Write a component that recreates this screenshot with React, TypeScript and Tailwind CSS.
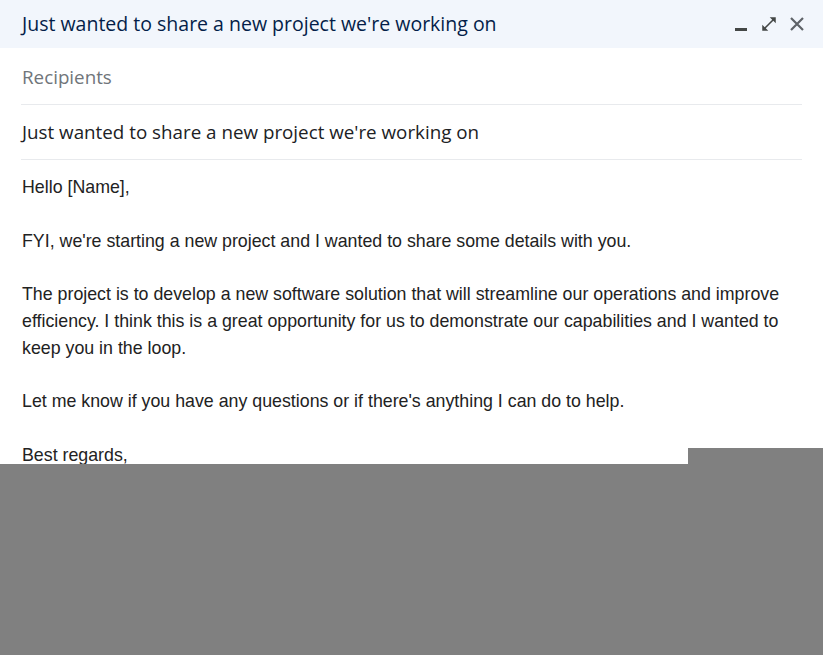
import React from "react";

export default function App() {
  return (
    <div className="relative w-[823px] h-[655px] overflow-hidden bg-white">
      <div className="h-[48px] bg-[#f2f6fc] flex items-center justify-between pl-[22px] pr-[19px]">
        <div className="text-[19.5px] text-[#041e49] font-medium" style={{ fontFamily: '"Open Sans", Roboto, sans-serif' }}>
          Just wanted to share a new project we're working on
        </div>
        <div className="flex items-center text-[#444746]">
          <svg width="12" height="16" viewBox="0 0 12 16" className="mt-[2px]">
            <rect x="0" y="11" width="12" height="3" fill="currentColor" />
          </svg>
          <svg width="18" height="18" viewBox="0 0 24 24" className="ml-[13px]">
            <path d="M21 11V3h-8l3.29 3.29-10 10L3 13v8h8l-3.29-3.29 10-10z" fill="currentColor" />
          </svg>
          <svg width="14" height="14" viewBox="0 0 14 14" className="ml-[12px] text-[#5f6368]">
            <path d="M1 1l12 12M13 1L1 13" stroke="currentColor" strokeWidth="2.2" />
          </svg>
        </div>
      </div>
      <div className="px-[21px]">
        <div className="h-[57px] flex items-center border-b border-[#e8eaed] text-[18.8px] text-[#70757a]" style={{ fontFamily: '"Open Sans", Roboto, sans-serif' }}>
          <span className="pl-[1px] mt-[2px]">Recipients</span>
        </div>
        <div className="h-[55px] flex items-center border-b border-[#e8eaed] text-[18.8px] text-[#202124]" style={{ fontFamily: '"Open Sans", Roboto, sans-serif' }}>
          <span className="pl-[1px] mt-[1px]">Just wanted to share a new project we're working on</span>
        </div>
        <div className="pt-[14px] pl-[1px] text-[17.8px] leading-[26.8px] text-[#222222]" style={{ fontFamily: '"Liberation Sans", Arial, sans-serif' }}>
          <p>Hello [Name],</p>
          <p className="mt-[26.8px]">FYI, we're starting a new project and I wanted to share some details with you.</p>
          <p className="mt-[26.8px]">The project is to develop a new software solution that will streamline our operations and improve efficiency. I think this is a great opportunity for us to demonstrate our capabilities and I wanted to keep you in the loop.</p>
          <p className="mt-[26.8px]">Let me know if you have any questions or if there's anything I can do to help.</p>
          <p className="mt-[26.8px]">Best regards,</p>
        </div>
      </div>
      <div className="absolute left-[688px] top-[448px] right-0 bottom-0 bg-[#808080]" />
      <div className="absolute left-0 top-[464px] right-0 bottom-0 bg-[#808080]" />
    </div>
  );
}
